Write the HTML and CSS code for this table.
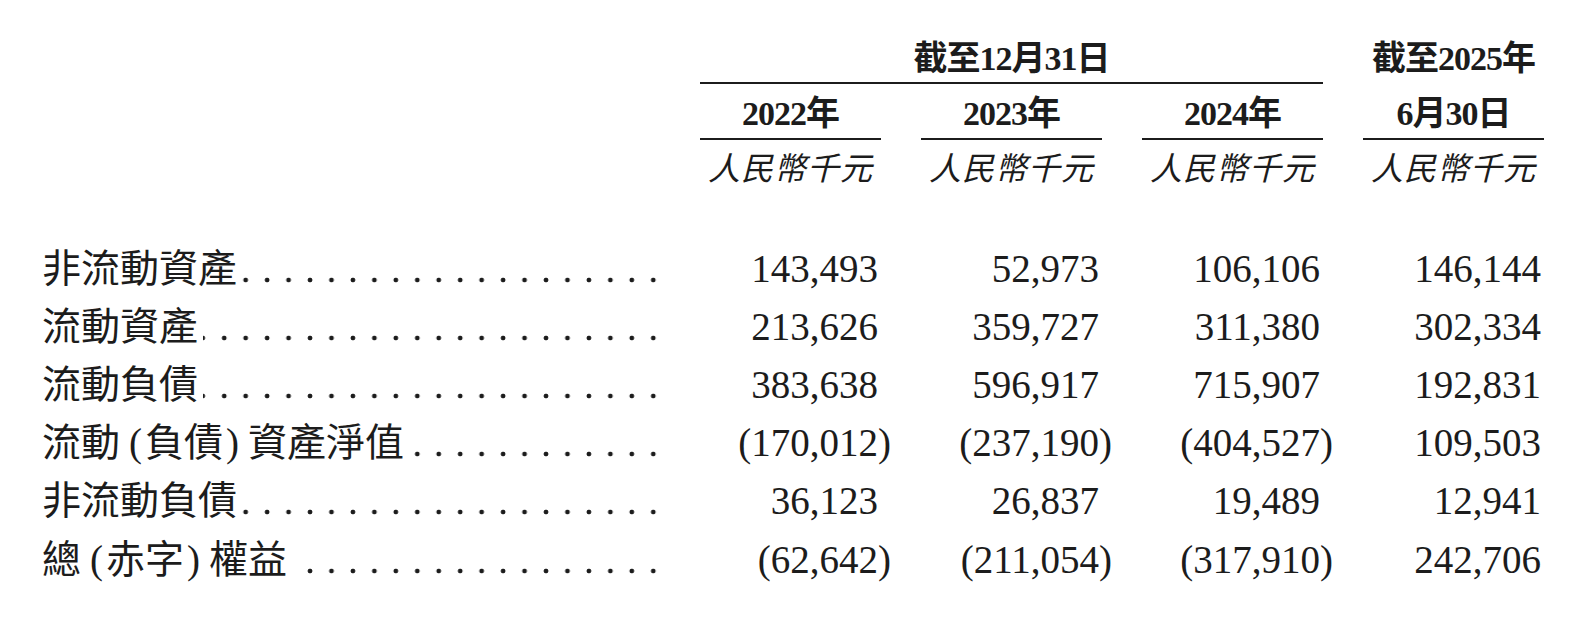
FILE: index.html
```html
<!DOCTYPE html>
<html lang="zh-Hant">
<head>
<meta charset="utf-8">
<title>財務狀況摘要</title>
<link rel="stylesheet" href="styles.css">
</head>
<body>
<div class="sheet">
  <div class="row head-a">
    <div></div>
    <div class="span3 ruled">截至12月31日</div>
    <div>截至2025年</div>
  </div>
  <div class="row head-b">
    <div></div>
    <div class="ruled">2022年</div>
    <div class="ruled">2023年</div>
    <div class="ruled">2024年</div>
    <div class="ruled">6月30日</div>
  </div>
  <div class="row head-c">
    <div></div>
    <div>人民幣千元</div>
    <div>人民幣千元</div>
    <div>人民幣千元</div>
    <div>人民幣千元</div>
  </div>

  <div class="body">
    <div class="row data">
      <div class="label"><span>非流動資產</span></div>
      <div class="num">143,493</div>
      <div class="num">52,973</div>
      <div class="num">106,106</div>
      <div class="num">146,144</div>
    </div>
    <div class="row data">
      <div class="label"><span>流動資產</span></div>
      <div class="num">213,626</div>
      <div class="num">359,727</div>
      <div class="num">311,380</div>
      <div class="num">302,334</div>
    </div>
    <div class="row data">
      <div class="label"><span>流動負債</span></div>
      <div class="num">383,638</div>
      <div class="num">596,917</div>
      <div class="num">715,907</div>
      <div class="num">192,831</div>
    </div>
    <div class="row data">
      <div class="label"><span>流動<i class="lp">(</i>負債<i class="rp">)</i>資產淨值</span></div>
      <div class="num"><span class="neg">(170,012)</span></div>
      <div class="num"><span class="neg">(237,190)</span></div>
      <div class="num"><span class="neg">(404,527)</span></div>
      <div class="num">109,503</div>
    </div>
    <div class="row data">
      <div class="label"><span>非流動負債</span></div>
      <div class="num">36,123</div>
      <div class="num">26,837</div>
      <div class="num">19,489</div>
      <div class="num">12,941</div>
    </div>
    <div class="row data">
      <div class="label"><span>總<i class="lp">(</i>赤字<i class="rp">)</i>權益</span></div>
      <div class="num"><span class="neg">(62,642)</span></div>
      <div class="num"><span class="neg">(211,054)</span></div>
      <div class="num"><span class="neg">(317,910)</span></div>
      <div class="num">242,706</div>
    </div>
  </div>
</div>
</body>
</html>
```

FILE: styles.css
```css
html, body {
  margin: 0;
  padding: 0;
  background: #ffffff;
}

body {
  color: #1c1c1c;
  font-family: "Liberation Serif", "Noto Sans CJK TC", serif;
}

.sheet {
  padding: 39px 0 0 42px;
}

.row {
  display: grid;
  grid-template-columns: 618px repeat(4, 181px);
  column-gap: 40px;
}

.ruled {
  border-bottom: 2px solid #1c1c1c;
}

.span3 {
  grid-column: 2 / 5;
}

.head-a,
.head-b {
  font-weight: bold;
  font-size: 34px;
  letter-spacing: -1px;
  line-height: 40px;
  text-align: center;
}

.head-a > div {
  padding-bottom: 3px;
}

.head-b > div {
  padding-top: 10px;
  padding-bottom: 4px;
}

.head-c {
  font-size: 32px;
  font-style: italic;
  letter-spacing: 1px;
  line-height: 40px;
  text-align: center;
}

.head-c > div {
  padding-top: 9px;
}

.body {
  margin-top: 50.7px;
}

.data {
  height: 58.2px;
  line-height: 58.2px;
  font-size: 39px;
}

.label {
  font-size: 39px;
  white-space: nowrap;
  background-image: radial-gradient(circle at 50% 50%, #1c1c1c 0, #1c1c1c 2px, rgba(28, 28, 28, 0) 2.7px);
  background-size: 21.46px 8px;
  background-repeat: repeat-x;
  background-position: right -4px top 36px;
}

.label > span {
  background: #ffffff;
  padding-right: 5px;
}

.label i {
  font-style: normal;
}

.label .lp {
  margin-left: 9px;
  margin-right: 3px;
}

.label .rp {
  margin-left: 3px;
  margin-right: 9px;
}

.num {
  text-align: right;
  padding-right: 3px;
  white-space: nowrap;
}

.neg {
  display: inline-block;
  margin-right: -13px;
}
```
